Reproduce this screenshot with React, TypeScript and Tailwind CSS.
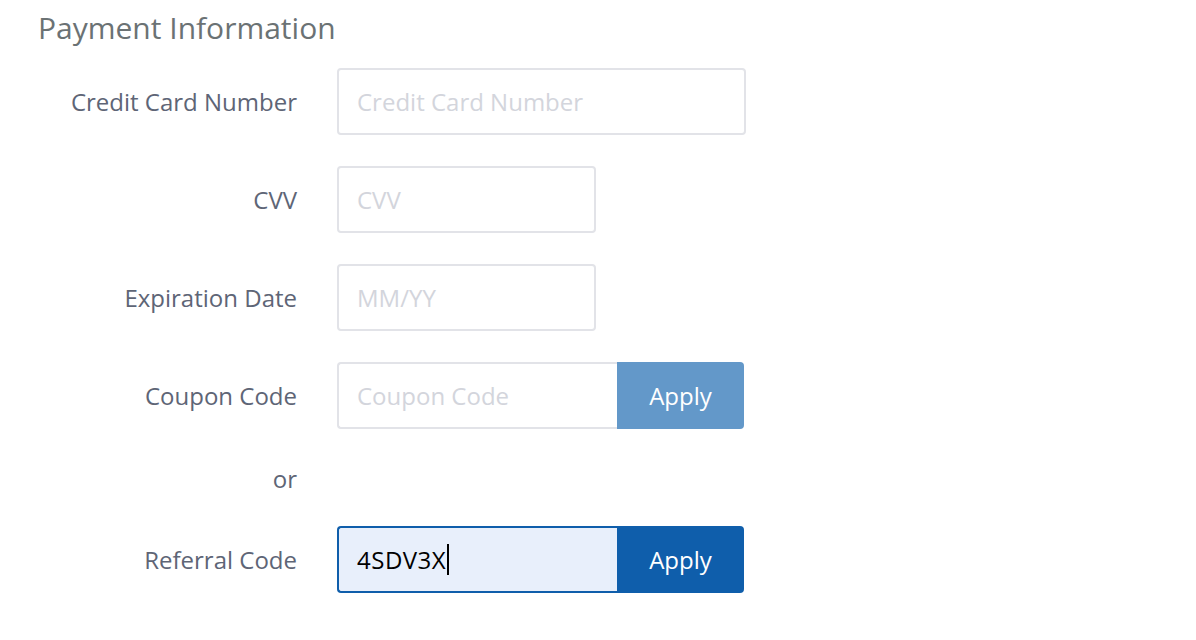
import React from "react";

const font = { fontFamily: '"Open Sans", "Noto Sans", sans-serif' };

function Label({ children }: { children: React.ReactNode }) {
  return (
    <div className="w-[259px] shrink-0 text-right text-[24px] text-[#5e6576]">{children}</div>
  );
}

function Row({ label, children }: { label: string; children: React.ReactNode }) {
  return (
    <div className="flex h-[67px] items-center gap-[40px]">
      <Label>{label}</Label>
      {children}
    </div>
  );
}

const inputCls =
  "h-[67px] rounded-[4px] border-2 border-[#e2e3e8] bg-white px-[18px] text-[24px] text-black outline-none placeholder:text-[#d3d5dc]";

export default function App() {
  return (
    <div className="min-h-[640px] w-[1196px] bg-white pl-[38px]" style={font}>
      <h1 className="pt-[8px] text-[30px] leading-[40px] font-normal text-[#6b7274]">Payment Information</h1>
      <div className="mt-[20px] flex flex-col gap-[31px]">
        <Row label="Credit Card Number">
          <input className={`${inputCls} w-[409px]`} placeholder="Credit Card Number" />
        </Row>
        <Row label="CVV">
          <input className={`${inputCls} w-[259px]`} placeholder="CVV" />
        </Row>
        <Row label="Expiration Date">
          <input className={`${inputCls} w-[259px]`} placeholder="MM/YY" />
        </Row>
        <Row label="Coupon Code">
          <div className="flex h-[67px] w-[407px]">
            <input
              className={`${inputCls} w-[280px] rounded-r-none border-r-0`}
              placeholder="Coupon Code"
            />
            <button className="h-[67px] w-[127px] rounded-r-[4px] bg-[#6398c9] text-[24px] text-white">
              Apply
            </button>
          </div>
        </Row>
        <div className="flex h-[35px] items-center gap-[40px]">
          <Label>
            <span className="relative top-[1px]">or</span>
          </Label>
        </div>
        <Row label="Referral Code">
          <div className="flex h-[67px] w-[407px]">
            <div className="flex h-[67px] w-[280px] items-center rounded-l-[4px] border-2 border-r-0 border-[#0f5eab] bg-[#e8effb] px-[18px] text-[24px] tracking-[0.5px] text-black">
              <span>4SDV3X</span>
              <span className="ml-[1px] h-[31px] w-[2px] bg-black" />
            </div>
            <button className="h-[67px] w-[127px] rounded-r-[4px] bg-[#0f5eab] text-[24px] text-white">
              Apply
            </button>
          </div>
        </Row>
      </div>
    </div>
  );
}
